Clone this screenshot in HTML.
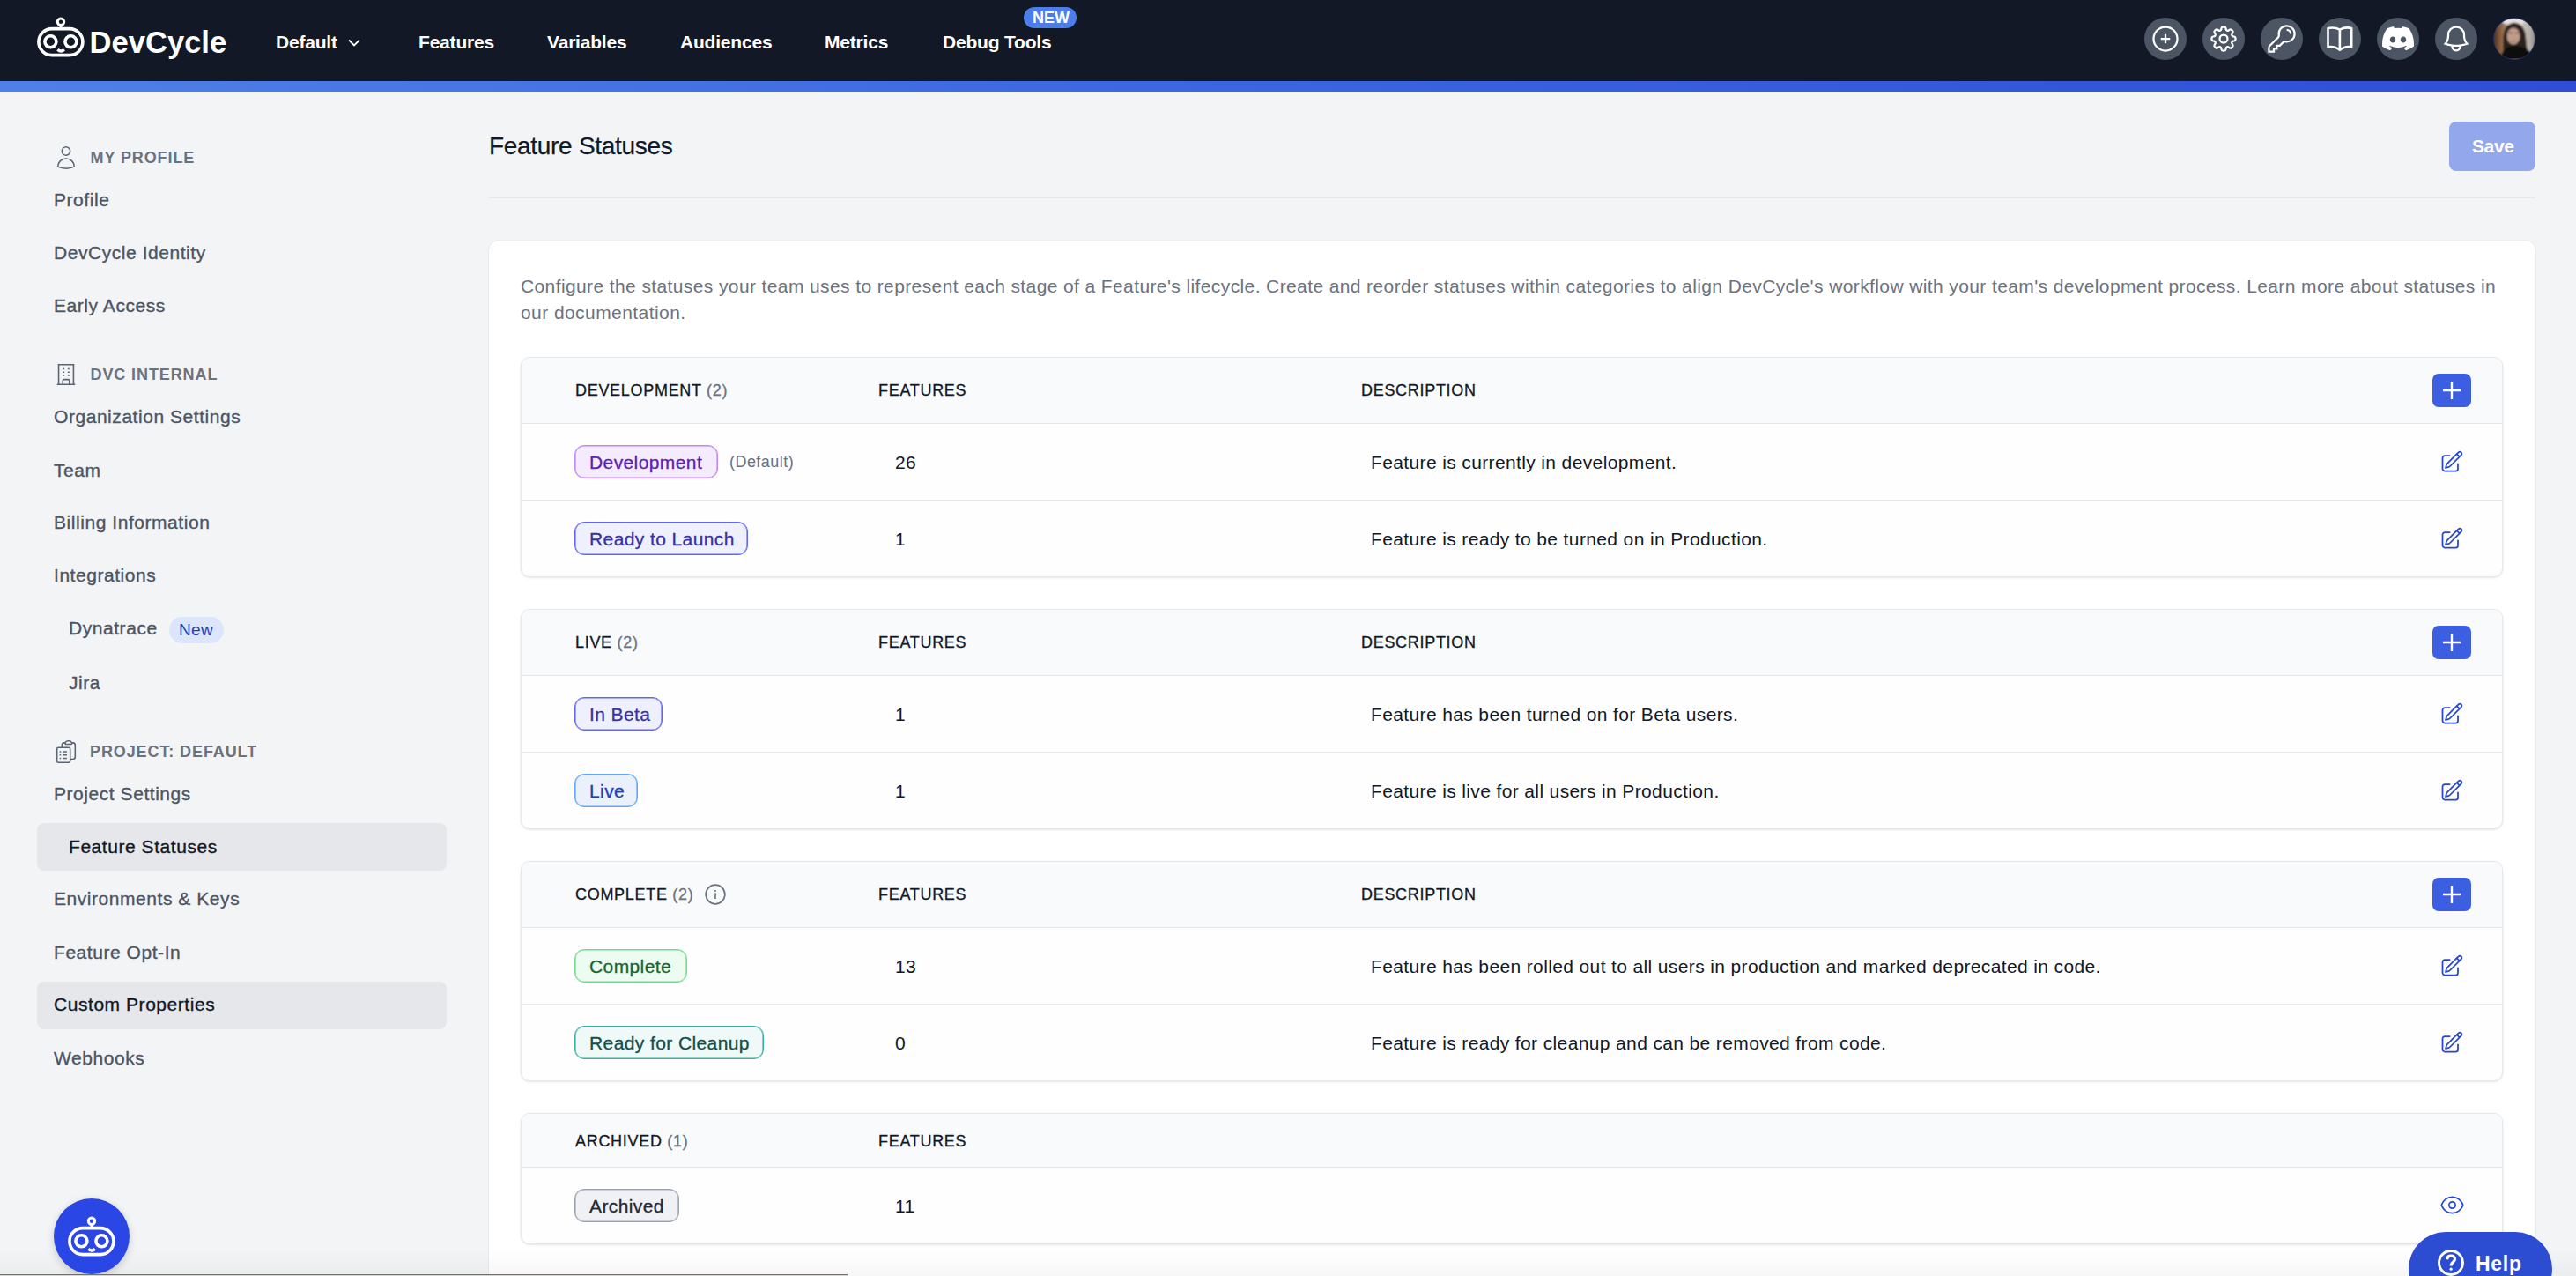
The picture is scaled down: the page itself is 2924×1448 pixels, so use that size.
<!DOCTYPE html>
<html><head><meta charset="utf-8">
<style>
*{box-sizing:border-box;margin:0;padding:0}
html,body{width:2924px;height:1448px;overflow:hidden;background:#f3f4f6;font-family:"Liberation Sans",sans-serif;position:relative}
.abs{position:absolute}
.t{position:absolute;white-space:nowrap;line-height:1}
#nav{position:absolute;left:0;top:0;width:2924px;height:92px;background:#131827}
#grad{position:absolute;left:0;top:92px;width:2924px;height:12px;background:linear-gradient(90deg,#4f80e7,#3a64e0 50%,#2f4ed5)}
.nv{color:#fff;font-weight:bold;font-size:21px;letter-spacing:-0.2px}
.circ{position:absolute;top:20px;width:48px;height:48px;border-radius:50%;background:#4b5563}
.circ svg{position:absolute;left:6px;top:6px;width:36px;height:36px}
.side{color:#4b5563;font-size:21px;letter-spacing:0.55px;-webkit-text-stroke:0.35px #4b5563}
.sh{color:#6b7280;font-size:18px;font-weight:bold;letter-spacing:0.9px}
.hl{position:absolute;left:42px;width:465px;height:54px;border-radius:8px;background:#e5e7eb}
#card{position:absolute;left:555px;top:273px;width:2323px;height:1300px;background:#fff;border-radius:12px;box-shadow:0 0 0 1px rgba(17,24,39,0.035),0 1px 2px rgba(0,0,0,0.05)}
.tbl{position:absolute;left:591px;width:2250px;border:1px solid #e5e7eb;border-radius:10px;background:#fefefe;box-shadow:0 1px 3px rgba(0,0,0,0.08),0 1px 2px -1px rgba(0,0,0,0.08);overflow:hidden}
.th{position:absolute;left:0;top:0;width:100%;background:#f9fafb;border-bottom:1px solid #e5e7eb}
.hd{color:#111827;font-size:18px;letter-spacing:0.7px;-webkit-text-stroke:0.3px #111827}
.hd .c{color:#6b7280;-webkit-text-stroke:0.3px #6b7280}
.badge{position:absolute;height:38px;border:2px solid;border-radius:10px;font-size:21px;padding:0 15px;white-space:nowrap;letter-spacing:0.4px}
.badge span{position:absolute;left:15px}
.cnt{color:#111827;font-size:21px;letter-spacing:0.4px}
.desc{color:#111827;font-size:21px;letter-spacing:0.37px}
.plus{position:absolute;width:44px;height:38px;border-radius:7px;background:#3b5fe0}
.edit{position:absolute;width:28px;height:28px}
</style></head><body>
<div id="nav">
<svg class="abs" style="left:40px;top:18px" width="60" height="50" viewBox="0 0 60 50">
    <g fill="none" stroke="#fff" stroke-width="3.6">
      <rect x="3.9" y="14.6" width="50" height="30" rx="15"/>
      <circle cx="17.4" cy="29.3" r="6.5"/>
      <circle cx="40.4" cy="29.3" r="6.5"/>
      <circle cx="29" cy="6.7" r="3.7" stroke-width="3"/>
      <path d="M29 10.4V13" stroke-width="3"/>
      <path d="M25.4 38.3 Q29.1 42 32.8 38.3" stroke-width="3.4"/>
    </g>
  </svg>
<div class="t " style="left:101.5px;top:30.96px;font-size:34.6px;font-weight:bold;color:#fff">DevCycle</div>
<div class="t nv" style="left:313px;top:37.22px;font-size:21px;">Default</div>
<div class="t nv" style="left:475px;top:37.22px;font-size:21px;">Features</div>
<div class="t nv" style="left:621px;top:37.22px;font-size:21px;">Variables</div>
<div class="t nv" style="left:772px;top:37.22px;font-size:21px;">Audiences</div>
<div class="t nv" style="left:936px;top:37.22px;font-size:21px;">Metrics</div>
<div class="t nv" style="left:1070px;top:37.22px;font-size:21px;">Debug Tools</div>
<svg class="abs" style="left:394px;top:43px" width="16" height="12" viewBox="0 0 16 12"><path d="M2 2.5 L8 8.5 L14 2.5" fill="none" stroke="#fff" stroke-width="1.8"/></svg>
<div class="abs" style="left:1162px;top:8px;width:60px;height:24px;border-radius:12px;background:#4b7ee8"></div>
<div class="t " style="left:1172px;top:10.96px;font-size:18px;font-weight:bold;color:#fff">NEW</div>
<div class="circ" style="left:2434px"><svg viewBox="0 0 24 24" fill="none" stroke="#fff" stroke-width="1.5"><circle cx="12" cy="12" r="9"/><path d="M12 8.5v7M8.5 12h7"/></svg></div>
<div class="circ" style="left:2500px"><svg viewBox="0 0 24 24" fill="none" stroke="#fff" stroke-width="1.5"><path d="M10.343 3.94c.09-.542.56-.94 1.11-.94h1.093c.55 0 1.02.398 1.11.94l.149.894c.07.424.384.764.78.93.398.164.855.142 1.205-.108l.737-.527a1.125 1.125 0 0 1 1.45.12l.773.774c.39.389.44 1.002.12 1.45l-.527.737c-.25.35-.272.806-.107 1.204.165.397.505.71.93.78l.893.15c.543.09.94.559.94 1.109v1.094c0 .55-.397 1.02-.94 1.11l-.894.149c-.424.07-.764.383-.929.78-.165.398-.143.854.107 1.204l.527.738c.32.447.269 1.06-.12 1.45l-.774.773a1.125 1.125 0 0 1-1.449.12l-.738-.527c-.35-.25-.806-.272-1.203-.107-.398.165-.71.505-.781.929l-.149.894c-.09.542-.56.94-1.11.94h-1.094c-.55 0-1.019-.398-1.11-.94l-.148-.894c-.071-.424-.384-.764-.781-.93-.398-.164-.854-.142-1.204.108l-.738.527c-.447.32-1.06.269-1.45-.12l-.773-.774a1.125 1.125 0 0 1-.12-1.45l.527-.737c.25-.35.272-.806.108-1.204-.165-.397-.506-.71-.93-.78l-.894-.15c-.542-.09-.94-.56-.94-1.109v-1.094c0-.55.398-1.02.94-1.11l.894-.149c.424-.07.765-.383.93-.78.165-.398.143-.854-.108-1.204l-.526-.738a1.125 1.125 0 0 1 .12-1.45l.773-.773a1.125 1.125 0 0 1 1.45-.12l.737.527c.35.25.807.272 1.204.107.397-.165.71-.505.78-.929l.15-.894Z"/><circle cx="12" cy="12" r="3"/></svg></div>
<div class="circ" style="left:2566px"><svg viewBox="0 0 24 24" fill="none" stroke="#fff" stroke-width="1.5"><path d="M15.75 5.25a3 3 0 0 1 3 3m3 0a6 6 0 0 1-7.029 5.912c-.563-.097-1.159.026-1.563.43L10.5 17.25H8.25v2.25H6v2.25H2.25v-2.818c0-.597.237-1.17.659-1.591l6.499-6.499c.404-.404.527-1 .43-1.563A6 6 0 1 1 21.75 8.25Z"/></svg></div>
<div class="circ" style="left:2632px"><svg style="left:0;top:0;width:48px;height:48px" viewBox="0 0 48 48" fill="none" stroke="#fff" stroke-width="2.6" stroke-linejoin="round"><path d="M10.5 12C15 11 20 11.5 23.9 13.6C27.8 11.5 33 11 37.2 12V33.3C33 32.5 28 33.5 23.9 36.8C19.8 33.5 15 32.5 10.5 33.3Z M23.9 13.6V36.8"/></svg></div>
<div class="circ" style="left:2698px"><svg style="left:6px;top:10.2px;width:36px;height:27.3px" viewBox="0 0 127.14 96.36"><path fill="#fff" d="M107.7,8.07A105.15,105.15,0,0,0,81.47,0a72.06,72.06,0,0,0-3.36,6.83A97.68,97.68,0,0,0,49,6.83,72.37,72.37,0,0,0,45.64,0,105.89,105.89,0,0,0,19.39,8.09C2.79,32.65-1.71,56.6.54,80.21h0A105.73,105.73,0,0,0,32.71,96.36,77.7,77.7,0,0,0,39.6,85.25a68.42,68.42,0,0,1-10.85-5.180c.91-.66,1.8-1.34,2.66-2a75.57,75.57,0,0,0,64.32,0c.87.71,1.76,1.39,2.66,2a68.68,68.68,0,0,1-10.87,5.19,77,77,0,0,0,6.89,11.1A105.25,105.25,0,0,0,126.6,80.22h0C129.24,52.84,122.09,29.11,107.7,8.07ZM42.45,65.690C36.18,65.69,31,60,31,53s5-12.74,11.43-12.74S54,46,53.89,53,48.84,65.69,42.45,65.69Zm42.24,0C78.41,65.69,73.25,60,73.25,53s5-12.74,11.44-12.74S96.230,46,96.12,53,91.08,65.69,84.69,65.69Z"/></svg></div>
<div class="circ" style="left:2764px"><svg viewBox="0 0 24 24" fill="none" stroke="#fff" stroke-width="1.5"><path d="M14.857 17.082a23.848 23.848 0 0 0 5.454-1.31A8.967 8.967 0 0 1 18 9.750V9A6 6 0 0 0 6 9v.75a8.967 8.967 0 0 1-2.312 6.022c1.733.64 3.56 1.085 5.455 1.31m5.714 0a24.255 24.255 0 0 1-5.714 0m5.714 0a3 3 0 1 1-5.714 0"/></svg></div>
<div class="circ" style="left:2830px;background:#1b1e2a;overflow:hidden"><svg style="left:0;top:0;width:48px;height:48px" viewBox="0 0 48 48"><defs><linearGradient id="avbg" x1="0" x2="1" y1="0" y2="0"><stop offset="0" stop-color="#2e2018"/><stop offset="0.12" stop-color="#6a4630"/><stop offset="0.25" stop-color="#9a7050"/><stop offset="0.4" stop-color="#a89888"/><stop offset="0.6" stop-color="#d2cec8"/><stop offset="0.85" stop-color="#b2aea6"/><stop offset="1" stop-color="#7a776f"/></linearGradient><clipPath id="avc"><circle cx="24" cy="24" r="23.6"/></clipPath><filter id="avb" x="-10%" y="-10%" width="120%" height="120%"><feGaussianBlur stdDeviation="0.9"/></filter></defs><g clip-path="url(#avc)"><g filter="url(#avb)"><rect x="-2" y="-2" width="52" height="52" fill="url(#avbg)"/><ellipse cx="23" cy="3" rx="13" ry="6" fill="#e4e2de"/><path d="M11 48C12 36 10 22 13 14C16 7 21 5.5 24.5 5.8C30 6.2 34 10 36 16C38 24 37 32 40 40L42 48Z" fill="#2b211b"/><ellipse cx="23" cy="21" rx="7.4" ry="9.6" fill="#c19a8a"/><path d="M17.5 17.5h4.5M25 17.5h4.5" stroke="#5a4038" stroke-width="1.1"/><path d="M20.5 26.5q2.5 1.5 5 0" stroke="#8a5a50" stroke-width="0.9" fill="none"/><path d="M6 48C10 38 15 32.5 23 32C32 32 40 36 46 42V48Z" fill="#080808"/></g></g><circle cx="24" cy="24" r="23.5" fill="none" stroke="#26327a" stroke-width="0.9"/></svg></div>
</div>
<div id="grad"></div>
<svg class="abs" style="left:60px;top:163.5px" width="30" height="30" viewBox="0 0 24 24" fill="none" stroke="#5b6472" stroke-width="1.25"><path d="M15.75 6a3.75 3.75 0 1 1-7.5 0 3.75 3.75 0 0 1 7.5 0ZM4.501 20.118a7.5 7.5 0 0 1 14.998 0A17.933 17.933 0 0 1 12 21.75c-2.676 0-5.216-.584-7.499-1.632Z"/></svg>
<div class="t sh" style="left:102.5px;top:170px;font-size:18px;">MY PROFILE</div>
<div class="t side" style="left:61px;top:216px;font-size:21px;">Profile</div>
<div class="t side" style="left:61px;top:276px;font-size:21px;">DevCycle Identity</div>
<div class="t side" style="left:61px;top:336px;font-size:21px;">Early Access</div>
<svg class="abs" style="left:60.15px;top:409.8px" width="30" height="30" viewBox="0 0 24 24" fill="none" stroke="#5b6472" stroke-width="1.25"><path d="M3.75 21h16.5M4.5 3h15M5.25 3v18m13.5-18v18M9 6.75h1.5m-1.5 3h1.5m-1.5 3h1.5m3-6H15m-1.5 3H15m-1.5 3H15M9 21v-3.375c0-.621.504-1.125 1.125-1.125h3.75c.621 0 1.125.504 1.125 1.125V21"/></svg>
<div class="t sh" style="left:102.5px;top:416px;font-size:18px;">DVC INTERNAL</div>
<div class="t side" style="left:61px;top:462px;font-size:21px;">Organization Settings</div>
<div class="t side" style="left:61px;top:523px;font-size:21px;">Team</div>
<div class="t side" style="left:61px;top:582px;font-size:21px;">Billing Information</div>
<div class="t side" style="left:61px;top:642px;font-size:21px;">Integrations</div>
<div class="t side" style="left:78px;top:702px;font-size:21px;">Dynatrace</div>
<div class="abs" style="left:192px;top:700px;width:62px;height:30px;border-radius:15px;background:#dbe5fb"></div>
<div class="t " style="left:203px;top:704.72px;font-size:19px;color:#1e40af;letter-spacing:0.3px">New</div>
<div class="t side" style="left:78px;top:764px;font-size:21px;">Jira</div>
<svg class="abs" style="left:60.05px;top:837.9px" width="30" height="30" viewBox="0 0 24 24" fill="none" stroke="#5b6472" stroke-width="1.25"><path d="M9 12h3.75M9 15h3.75M9 18h3.75m3 .75H18a2.25 2.25 0 0 0 2.25-2.25V6.108c0-1.135-.845-2.098-1.976-2.192a48.424 48.424 0 0 0-1.123-.08m-5.801 0c-.065.21-.1.433-.1.664 0 .414.336.75.75.75h4.5a.75.75 0 0 0 .75-.75 2.25 2.25 0 0 0-.1-.664m-5.8 0A2.251 2.251 0 0 1 13.5 2.25H15c1.012 0 1.867.668 2.15 1.586m-5.8 0c-.376.023-.75.05-1.124.08C9.095 4.01 8.25 4.973 8.25 6.108V8.25m0 0H4.875c-.621 0-1.125.504-1.125 1.125v11.25c0 .621.504 1.125 1.125 1.125h9.75c.621 0 1.125-.504 1.125-1.125V9.375c0-.621-.504-1.125-1.125-1.125H8.25ZM6.75 12h.008v.008H6.75V12Zm0 3h.008v.008H6.75V15Zm0 3h.008v.008H6.75V18Z"/></svg>
<div class="t sh" style="left:102px;top:844px;font-size:18px;">PROJECT: DEFAULT</div>
<div class="t side" style="left:61px;top:890px;font-size:21px;">Project Settings</div>
<div class="hl" style="top:934px"></div>
<div class="t side" style="left:78px;top:950px;font-size:21px;color:#111827;-webkit-text-stroke-color:#111827">Feature Statuses</div>
<div class="t side" style="left:61px;top:1009px;font-size:21px;">Environments &amp; Keys</div>
<div class="t side" style="left:61px;top:1070px;font-size:21px;">Feature Opt-In</div>
<div class="hl" style="top:1114px"></div>
<div class="t side" style="left:61px;top:1129px;font-size:21px;color:#111827;-webkit-text-stroke-color:#111827">Custom Properties</div>
<div class="t side" style="left:61px;top:1190px;font-size:21px;">Webhooks</div>
<div class="t " style="left:555px;top:152.3px;font-size:28px;color:#111827;letter-spacing:-0.3px;-webkit-text-stroke:0.25px #111827">Feature Statuses</div>
<div class="abs" style="left:2780px;top:138px;width:98px;height:56px;border-radius:8px;background:#93a8ec"></div>
<div class="t " style="left:2806px;top:154.92px;font-size:21px;font-weight:bold;color:#fff;letter-spacing:-0.4px">Save</div>
<div class="abs" style="left:555px;top:224px;width:2323px;height:1px;background:#e5e7eb"></div>
<div id="card"></div>
<div class="t " style="left:591px;top:314.22px;font-size:21px;color:#6b7280;letter-spacing:0.39px">Configure the statuses your team uses to represent each stage of a Feature's lifecycle. Create and reorder statuses within categories to align DevCycle's workflow with your team's development process. Learn more about statuses in</div>
<div class="t " style="left:591px;top:343.72px;font-size:21px;color:#6b7280;letter-spacing:0.43px">our documentation.</div>
<div class="tbl" style="top:405px;height:250px">
<div class="th" style="height:75px"></div>
<div class="abs" style="left:0;top:161px;width:100%;height:1px;background:#e5e7eb"></div>
</div>
<div class="t hd" style="left:653px;top:433.76px;font-size:18px;">DEVELOPMENT <span class="c">(2)</span></div>
<div class="t hd" style="left:997px;top:433.76px;font-size:18px;">FEATURES</div>
<div class="t hd" style="left:1545px;top:433.76px;font-size:18px;">DESCRIPTION</div>
<div class="plus" style="left:2761px;top:424px"><svg width="44" height="38" viewBox="0 0 44 38"><path d="M22 9v20M12 19h20" stroke="#fff" stroke-width="2.4"/></svg></div>
<div class="abs" style="left:652px;top:505px;width:163px;height:38px;border:1px solid #c084fc;box-shadow:inset 0 0 0 0.6px #c084fc;border-radius:11px;background:#f4ecfe"></div>
<div class="t badge-t" style="left:669px;top:514.22px;font-size:21px;color:#5b21b6;letter-spacing:0.4px;-webkit-text-stroke:0.3px #5b21b6">Development</div>
<div class="t " style="left:828px;top:514.76px;font-size:18px;color:#6b7280;letter-spacing:0.45px">(Default)</div>
<div class="t cnt" style="left:1016px;top:514.22px;font-size:21px;">26</div>
<div class="t desc" style="left:1556px;top:514.22px;font-size:21px;">Feature is currently in development.</div>
<svg class="edit" style="left:2769.2px;top:509.5px" viewBox="0 0 24 24" fill="none" stroke="#2646d0" stroke-width="1.5" stroke-linecap="round" stroke-linejoin="round"><path d="M16.862 4.487l1.687-1.688a1.875 1.875 0 1 1 2.652 2.652L10.582 16.070a4.5 4.5 0 0 1-1.897 1.13L6 18l.8-2.685a4.5 4.5 0 0 1 1.13-1.897l8.932-8.931Zm0 0L19.5 7.125M18 14v4.75A2.25 2.25 0 0 1 15.75 21H5.25A2.25 2.25 0 0 1 3 18.75V8.25A2.25 2.25 0 0 1 5.25 6H10"/></svg>
<div class="abs" style="left:652px;top:592px;width:197px;height:38px;border:1px solid #6366f1;box-shadow:inset 0 0 0 0.6px #6366f1;border-radius:11px;background:#eff0fe"></div>
<div class="t badge-t" style="left:669px;top:601.22px;font-size:21px;color:#3730a3;letter-spacing:0.4px;-webkit-text-stroke:0.3px #3730a3">Ready to Launch</div>
<div class="t cnt" style="left:1016px;top:601.22px;font-size:21px;">1</div>
<div class="t desc" style="left:1556px;top:601.22px;font-size:21px;">Feature is ready to be turned on in Production.</div>
<svg class="edit" style="left:2769.2px;top:596.5px" viewBox="0 0 24 24" fill="none" stroke="#2646d0" stroke-width="1.5" stroke-linecap="round" stroke-linejoin="round"><path d="M16.862 4.487l1.687-1.688a1.875 1.875 0 1 1 2.652 2.652L10.582 16.070a4.5 4.5 0 0 1-1.897 1.13L6 18l.8-2.685a4.5 4.5 0 0 1 1.13-1.897l8.932-8.931Zm0 0L19.5 7.125M18 14v4.75A2.25 2.25 0 0 1 15.75 21H5.25A2.25 2.25 0 0 1 3 18.75V8.25A2.25 2.25 0 0 1 5.25 6H10"/></svg>
<div class="tbl" style="top:691px;height:250px">
<div class="th" style="height:75px"></div>
<div class="abs" style="left:0;top:161px;width:100%;height:1px;background:#e5e7eb"></div>
</div>
<div class="t hd" style="left:653px;top:719.76px;font-size:18px;">LIVE <span class="c">(2)</span></div>
<div class="t hd" style="left:997px;top:719.76px;font-size:18px;">FEATURES</div>
<div class="t hd" style="left:1545px;top:719.76px;font-size:18px;">DESCRIPTION</div>
<div class="plus" style="left:2761px;top:710px"><svg width="44" height="38" viewBox="0 0 44 38"><path d="M22 9v20M12 19h20" stroke="#fff" stroke-width="2.4"/></svg></div>
<div class="abs" style="left:652px;top:791px;width:100px;height:38px;border:1px solid #6366f1;box-shadow:inset 0 0 0 0.6px #6366f1;border-radius:11px;background:#eff0fe"></div>
<div class="t badge-t" style="left:669px;top:800.22px;font-size:21px;color:#3730a3;letter-spacing:0.4px;-webkit-text-stroke:0.3px #3730a3">In Beta</div>
<div class="t cnt" style="left:1016px;top:800.22px;font-size:21px;">1</div>
<div class="t desc" style="left:1556px;top:800.22px;font-size:21px;">Feature has been turned on for Beta users.</div>
<svg class="edit" style="left:2769.2px;top:795.5px" viewBox="0 0 24 24" fill="none" stroke="#2646d0" stroke-width="1.5" stroke-linecap="round" stroke-linejoin="round"><path d="M16.862 4.487l1.687-1.688a1.875 1.875 0 1 1 2.652 2.652L10.582 16.070a4.5 4.5 0 0 1-1.897 1.13L6 18l.8-2.685a4.5 4.5 0 0 1 1.13-1.897l8.932-8.931Zm0 0L19.5 7.125M18 14v4.75A2.25 2.25 0 0 1 15.75 21H5.25A2.25 2.25 0 0 1 3 18.75V8.25A2.25 2.25 0 0 1 5.25 6H10"/></svg>
<div class="abs" style="left:652px;top:878px;width:72px;height:38px;border:1px solid #60a5fa;box-shadow:inset 0 0 0 0.6px #60a5fa;border-radius:11px;background:#eaf1fd"></div>
<div class="t badge-t" style="left:669px;top:887.22px;font-size:21px;color:#1e40af;letter-spacing:0.4px;-webkit-text-stroke:0.3px #1e40af">Live</div>
<div class="t cnt" style="left:1016px;top:887.22px;font-size:21px;">1</div>
<div class="t desc" style="left:1556px;top:887.22px;font-size:21px;">Feature is live for all users in Production.</div>
<svg class="edit" style="left:2769.2px;top:882.5px" viewBox="0 0 24 24" fill="none" stroke="#2646d0" stroke-width="1.5" stroke-linecap="round" stroke-linejoin="round"><path d="M16.862 4.487l1.687-1.688a1.875 1.875 0 1 1 2.652 2.652L10.582 16.070a4.5 4.5 0 0 1-1.897 1.13L6 18l.8-2.685a4.5 4.5 0 0 1 1.13-1.897l8.932-8.931Zm0 0L19.5 7.125M18 14v4.75A2.25 2.25 0 0 1 15.75 21H5.25A2.25 2.25 0 0 1 3 18.75V8.25A2.25 2.25 0 0 1 5.25 6H10"/></svg>
<div class="tbl" style="top:977px;height:250px">
<div class="th" style="height:75px"></div>
<div class="abs" style="left:0;top:161px;width:100%;height:1px;background:#e5e7eb"></div>
</div>
<div class="t hd" style="left:653px;top:1005.76px;font-size:18px;">COMPLETE <span class="c">(2)</span></div>
<svg class="abs" style="left:799px;top:1002px" width="26" height="26" viewBox="0 0 24 24" fill="none" stroke="#6b7280" stroke-width="1.6"><circle cx="12" cy="12" r="10"/><path d="M11.25 11.25l.041-.02a.75.75 0 0 1 1.063.852l-.708 2.836a.75.75 0 0 0 1.063.853l.041-.021M12 8.25h.008v.008H12V8.25Z"/></svg>
<div class="t hd" style="left:997px;top:1005.76px;font-size:18px;">FEATURES</div>
<div class="t hd" style="left:1545px;top:1005.76px;font-size:18px;">DESCRIPTION</div>
<div class="plus" style="left:2761px;top:996px"><svg width="44" height="38" viewBox="0 0 44 38"><path d="M22 9v20M12 19h20" stroke="#fff" stroke-width="2.4"/></svg></div>
<div class="abs" style="left:652px;top:1077px;width:128px;height:38px;border:1px solid #6fdc8f;box-shadow:inset 0 0 0 0.6px #6fdc8f;border-radius:11px;background:#edfcf0"></div>
<div class="t badge-t" style="left:669px;top:1086.22px;font-size:21px;color:#166534;letter-spacing:0.4px;-webkit-text-stroke:0.3px #166534">Complete</div>
<div class="t cnt" style="left:1016px;top:1086.22px;font-size:21px;">13</div>
<div class="t desc" style="left:1556px;top:1086.22px;font-size:21px;">Feature has been rolled out to all users in production and marked deprecated in code.</div>
<svg class="edit" style="left:2769.2px;top:1081.5px" viewBox="0 0 24 24" fill="none" stroke="#2646d0" stroke-width="1.5" stroke-linecap="round" stroke-linejoin="round"><path d="M16.862 4.487l1.687-1.688a1.875 1.875 0 1 1 2.652 2.652L10.582 16.070a4.5 4.5 0 0 1-1.897 1.13L6 18l.8-2.685a4.5 4.5 0 0 1 1.13-1.897l8.932-8.931Zm0 0L19.5 7.125M18 14v4.75A2.25 2.25 0 0 1 15.75 21H5.25A2.25 2.25 0 0 1 3 18.75V8.25A2.25 2.25 0 0 1 5.25 6H10"/></svg>
<div class="abs" style="left:652px;top:1164px;width:215px;height:38px;border:1px solid #3fae9f;box-shadow:inset 0 0 0 0.6px #3fae9f;border-radius:11px;background:#effaf8"></div>
<div class="t badge-t" style="left:669px;top:1173.22px;font-size:21px;color:#134e4a;letter-spacing:0.4px;-webkit-text-stroke:0.3px #134e4a">Ready for Cleanup</div>
<div class="t cnt" style="left:1016px;top:1173.22px;font-size:21px;">0</div>
<div class="t desc" style="left:1556px;top:1173.22px;font-size:21px;">Feature is ready for cleanup and can be removed from code.</div>
<svg class="edit" style="left:2769.2px;top:1168.5px" viewBox="0 0 24 24" fill="none" stroke="#2646d0" stroke-width="1.5" stroke-linecap="round" stroke-linejoin="round"><path d="M16.862 4.487l1.687-1.688a1.875 1.875 0 1 1 2.652 2.652L10.582 16.070a4.5 4.5 0 0 1-1.897 1.13L6 18l.8-2.685a4.5 4.5 0 0 1 1.13-1.897l8.932-8.931Zm0 0L19.5 7.125M18 14v4.75A2.25 2.25 0 0 1 15.75 21H5.25A2.25 2.25 0 0 1 3 18.75V8.25A2.25 2.25 0 0 1 5.25 6H10"/></svg>
<div class="tbl" style="top:1263px;height:149px">
<div class="th" style="height:61px"></div>
</div>
<div class="t hd" style="left:653px;top:1285.56px;font-size:18px;">ARCHIVED <span class="c">(1)</span></div>
<div class="t hd" style="left:997px;top:1285.56px;font-size:18px;">FEATURES</div>
<div class="abs" style="left:652px;top:1349px;width:119px;height:38px;border:1px solid #9ca3af;box-shadow:inset 0 0 0 0.6px #9ca3af;border-radius:11px;background:#f0f1f4"></div>
<div class="t badge-t" style="left:669px;top:1358.22px;font-size:21px;color:#1f2937;letter-spacing:0.4px;-webkit-text-stroke:0.3px #1f2937">Archived</div>
<div class="t cnt" style="left:1016px;top:1358.22px;font-size:21px;">11</div>
<svg class="edit" style="left:2769.2px;top:1353.4px;width:29px;height:29px" viewBox="0 0 24 24" fill="none" stroke="#2646d0" stroke-width="1.4"><path d="M2.036 12.322a1.012 1.012 0 0 1 0-.639C3.423 7.510 7.360 4.5 12 4.5c4.638 0 8.573 3.007 9.963 7.178.07.207.07.431 0 .639C20.577 16.490 16.640 19.5 12 19.5c-4.638 0-8.573-3.007-9.963-7.178Z"/><circle cx="12" cy="12" r="3"/></svg>
<div class="abs" style="left:0;top:1416px;width:2924px;height:32px;background:linear-gradient(180deg,rgba(0,0,0,0),rgba(0,0,0,0.03))"></div>
<div class="abs" style="left:61px;top:1360px;width:86px;height:86px;border-radius:50%;background:#2a47e6;box-shadow:0 3px 10px rgba(0,0,0,0.18)"></div>
<svg class="abs" style="left:74.8px;top:1379px" width="60" height="50" viewBox="0 0 60 50">
    <g fill="none" stroke="#fff" stroke-width="3.6">
      <rect x="3.9" y="14.6" width="50" height="30" rx="15"/>
      <circle cx="17.4" cy="29.3" r="6.5"/>
      <circle cx="40.4" cy="29.3" r="6.5"/>
      <circle cx="29" cy="6.7" r="3.7" stroke-width="3"/>
      <path d="M29 10.4V13" stroke-width="3"/>
      <path d="M25.4 38.3 Q29.1 42 32.8 38.3" stroke-width="3.4"/>
    </g>
  </svg>
<div class="abs" style="left:2734px;top:1398px;width:163px;height:84px;border-radius:42px;background:#2c4cd1"></div>
<svg class="abs" style="left:2764px;top:1414.6px" width="36" height="36" viewBox="0 0 36 36" fill="none" stroke="#fff" stroke-width="3"><circle cx="18" cy="18" r="13.5"/><path d="M13.6 14.2c.3-2.6 2.1-4 4.5-4 2.6 0 4.4 1.6 4.4 3.9 0 2.9-3.9 3.3-4.3 6.4v1" stroke-width="3.2"/><circle cx="18.1" cy="25.2" r="1.6" fill="#fff" stroke="none"/></svg>
<div class="t " style="left:2810px;top:1423.03px;font-size:23px;font-weight:bold;color:#fff;letter-spacing:0.7px">Help</div>
<div class="abs" style="left:0;top:1446px;width:962px;height:1px;background:#707070"></div>
<div class="abs" style="left:0;top:1447px;width:962px;height:1px;background:#d8d6d2"></div>
</body></html>
